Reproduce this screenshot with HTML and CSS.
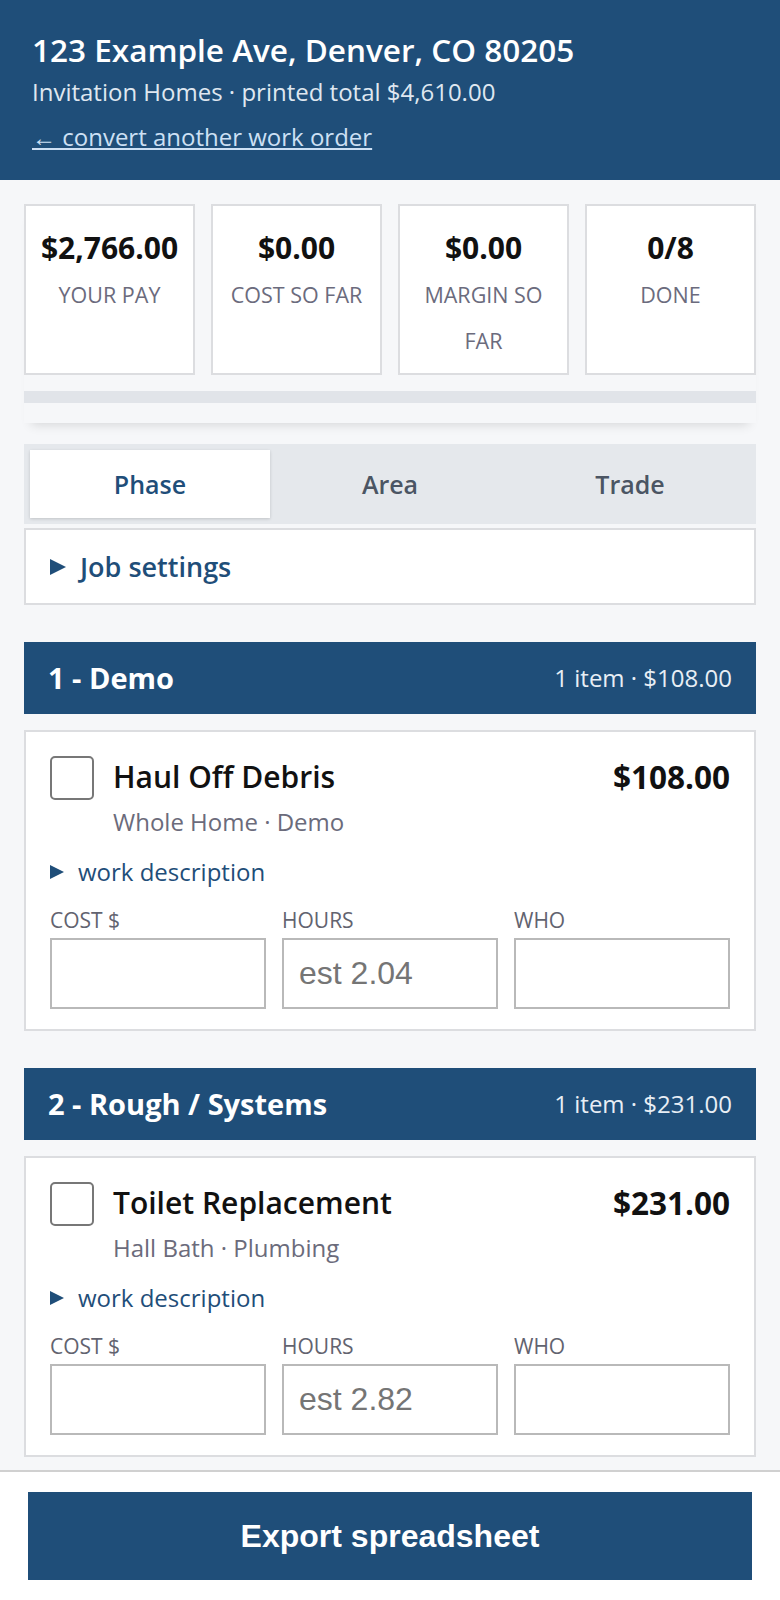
FILE: index.html
```html
<!DOCTYPE html>
<html lang="en">
<head>
<meta charset="utf-8">
<title>123 Example Ave, Denver, CO 80205</title>
<link rel="stylesheet" href="styles.css">
</head>
<body>
<header class="top">
  <h1 class="top-title">123 Example Ave, Denver, CO 80205</h1>
  <p class="top-sub">Invitation Homes · printed total $4,610.00</p>
  <p class="top-back"><a class="top-link" href="#">← convert another work order</a></p>
</header>

<main class="main">
  <section class="summary">
    <div class="stats">
      <div class="stat"><div class="stat-value">$2,766.00</div><div class="stat-label">YOUR PAY</div></div>
      <div class="stat"><div class="stat-value">$0.00</div><div class="stat-label">COST SO FAR</div></div>
      <div class="stat"><div class="stat-value">$0.00</div><div class="stat-label">MARGIN SO FAR</div></div>
      <div class="stat"><div class="stat-value">0/8</div><div class="stat-label">DONE</div></div>
    </div>
    <div class="progress"><div class="progress-fill" style="width:0%"></div></div>
  </section>

  <div class="tabs">
    <button class="tab tab-active" type="button">Phase</button>
    <button class="tab" type="button">Area</button>
    <button class="tab" type="button">Trade</button>
  </div>

  <details class="settings"><summary class="settings-sum">Job settings</summary></details>

  <section class="phase">
    <div class="phase-head"><h2 class="phase-title">1 - Demo</h2><span class="phase-meta">1 item · $108.00</span></div>
    <div class="item">
      <div class="item-top">
        <input class="check" type="checkbox" aria-label="done">
        <div class="item-info">
          <div class="item-title">Haul Off Debris</div>
          <div class="item-sub">Whole Home · Demo</div>
        </div>
        <div class="item-price">$108.00</div>
      </div>
      <details class="desc"><summary class="desc-sum">work description</summary></details>
      <div class="fields">
        <label class="field"><span class="field-label">COST $</span><input class="field-input" type="text"></label>
        <label class="field"><span class="field-label">HOURS</span><input class="field-input" type="text" placeholder="est 2.04"></label>
        <label class="field"><span class="field-label">WHO</span><input class="field-input" type="text"></label>
      </div>
    </div>
  </section>

  <section class="phase">
    <div class="phase-head"><h2 class="phase-title">2 - Rough / Systems</h2><span class="phase-meta">1 item · $231.00</span></div>
    <div class="item">
      <div class="item-top">
        <input class="check" type="checkbox" aria-label="done">
        <div class="item-info">
          <div class="item-title">Toilet Replacement</div>
          <div class="item-sub">Hall Bath · Plumbing</div>
        </div>
        <div class="item-price">$231.00</div>
      </div>
      <details class="desc"><summary class="desc-sum">work description</summary></details>
      <div class="fields">
        <label class="field"><span class="field-label">COST $</span><input class="field-input" type="text"></label>
        <label class="field"><span class="field-label">HOURS</span><input class="field-input" type="text" placeholder="est 2.82"></label>
        <label class="field"><span class="field-label">WHO</span><input class="field-input" type="text"></label>
      </div>
    </div>
  </section>
</main>

<footer class="footer">
  <button class="export" type="button">Export spreadsheet</button>
</footer>
</body>
</html>
```

FILE: styles.css
```css
* { box-sizing: border-box; }
html, body { margin: 0; padding: 0; }
body {
  background: #f6f7f9;
  font-family: "Open Sans", "Noto Sans", "Segoe UI", sans-serif;
  color: #111;
}

/* header */
.top {
  background: #1f4e79;
  color: #fff;
  padding: 31px 32px 28px;
}
.top-title {
  margin: 0;
  font-size: 31.5px;
  font-weight: 600;
  line-height: 38px;
}
.top-sub {
  margin: 8px 0 0;
  font-size: 24px;
  line-height: 30px;
  color: #dfe7f0;
}
.top-back {
  margin: 15px 0 0;
  font-size: 24px;
  line-height: 30px;
}
.top-link { color: #cde0f4; text-decoration: underline; }

/* main */
.main { padding: 24px 24px 160px; }

.summary {
  background: #f6f7f9;
  padding-bottom: 20px;
  box-shadow: 0 9px 10px -7px rgba(0, 0, 0, 0.13);
}
.stats {
  display: grid;
  grid-template-columns: repeat(4, 1fr);
  gap: 16px;
}
.stat {
  background: #fff;
  border: 2px solid #dcdde0;
  padding: 18px 12px 9px;
  text-align: center;
}
.stat-value { font-size: 30px; font-weight: 700; line-height: 48px; }
.stat-label { font-size: 21.5px; line-height: 46px; color: #6b6b7d; }
.progress { margin-top: 16px; height: 12px; background: #e1e4e9; }
.progress-fill { height: 100%; background: #1f4e79; }

/* tabs */
.tabs {
  margin-top: 21px;
  background: #e5e8ec;
  padding: 6px;
  display: grid;
  grid-template-columns: repeat(3, 1fr);
}
.tab {
  height: 68px;
  border: 0;
  background: transparent;
  font-family: inherit;
  font-size: 25px;
  font-weight: 600;
  color: #4b5563;
  padding: 0;
}
.tab-active {
  background: #fff;
  color: #1f4e79;
  box-shadow: 0 1px 3px rgba(0, 0, 0, 0.16);
}

/* job settings */
.settings {
  margin-top: 4px;
  background: #fff;
  border: 2px solid #dcdde0;
}
.settings-sum {
  list-style: none;
  display: flex;
  align-items: center;
  gap: 14px;
  padding: 20px 24px;
  font-size: 27px;
  font-weight: 600;
  line-height: 33px;
  color: #1f4e79;
}
.settings-sum::-webkit-details-marker { display: none; }
.settings-sum::before {
  content: "";
  border-left: 16px solid #1f4e79;
  border-top: 8.5px solid transparent;
  border-bottom: 8.5px solid transparent;
}

/* phases */
.phase { margin-top: 37px; }
.phase + .phase { margin-top: 37px; }
.phase-head {
  background: #1f4e79;
  color: #fff;
  height: 72px;
  padding: 0 24px;
  display: flex;
  align-items: center;
  justify-content: space-between;
}
.phase-title { margin: 0; font-size: 29px; font-weight: 700; line-height: 36px; }
.phase-meta { font-size: 24px; line-height: 30px; color: #e8eef5; }

.item {
  margin-top: 16px;
  background: #fff;
  border: 2px solid #dcdde0;
  padding: 24px 24px 20px;
}
.item-top {
  display: grid;
  grid-template-columns: 44px 1fr auto;
  column-gap: 19px;
  align-items: start;
}
.check {
  appearance: none;
  -webkit-appearance: none;
  margin: 0;
  width: 44px;
  height: 44px;
  border: 2px solid #777;
  border-radius: 5px;
  background: #fff;
}
.item-title { font-size: 30px; font-weight: 600; line-height: 42px; }
.item-sub { margin-top: 8px; font-size: 24px; line-height: 32px; color: #6b6b7b; }
.item-price { font-size: 31.5px; font-weight: 700; line-height: 42px; }

.desc { margin-top: 18px; }
.desc-sum {
  list-style: none;
  display: flex;
  align-items: center;
  gap: 14px;
  font-size: 24px;
  line-height: 32px;
  color: #1f4e79;
}
.desc-sum::-webkit-details-marker { display: none; }
.desc-sum::before {
  content: "";
  border-left: 14px solid #1f4e79;
  border-top: 7px solid transparent;
  border-bottom: 7px solid transparent;
}

.fields {
  margin-top: 20px;
  display: grid;
  grid-template-columns: repeat(3, 1fr);
  gap: 16px;
}
.field { display: flex; flex-direction: column; gap: 6px; }
.field-label { font-size: 21px; line-height: 24px; color: #62636f; }
.field-input {
  width: 100%;
  height: 71px;
  border: 2px solid #b9b9b9;
  border-radius: 0;
  padding: 0 15px;
  font-family: "Liberation Sans", Arial, sans-serif;
  font-size: 32px;
  color: #111;
  background: #fff;
}
.field-input::placeholder { color: #757575; }

/* footer */
.footer {
  position: fixed;
  left: 0;
  right: 0;
  bottom: 0;
  background: #fff;
  border-top: 2px solid #d0d0d0;
  padding: 20px 28px;
}
.export {
  display: block;
  width: 100%;
  height: 88px;
  border: 0;
  background: #1f4e79;
  color: #fff;
  font-family: "Liberation Sans", Arial, sans-serif;
  font-size: 32px;
  font-weight: 700;
}
```
